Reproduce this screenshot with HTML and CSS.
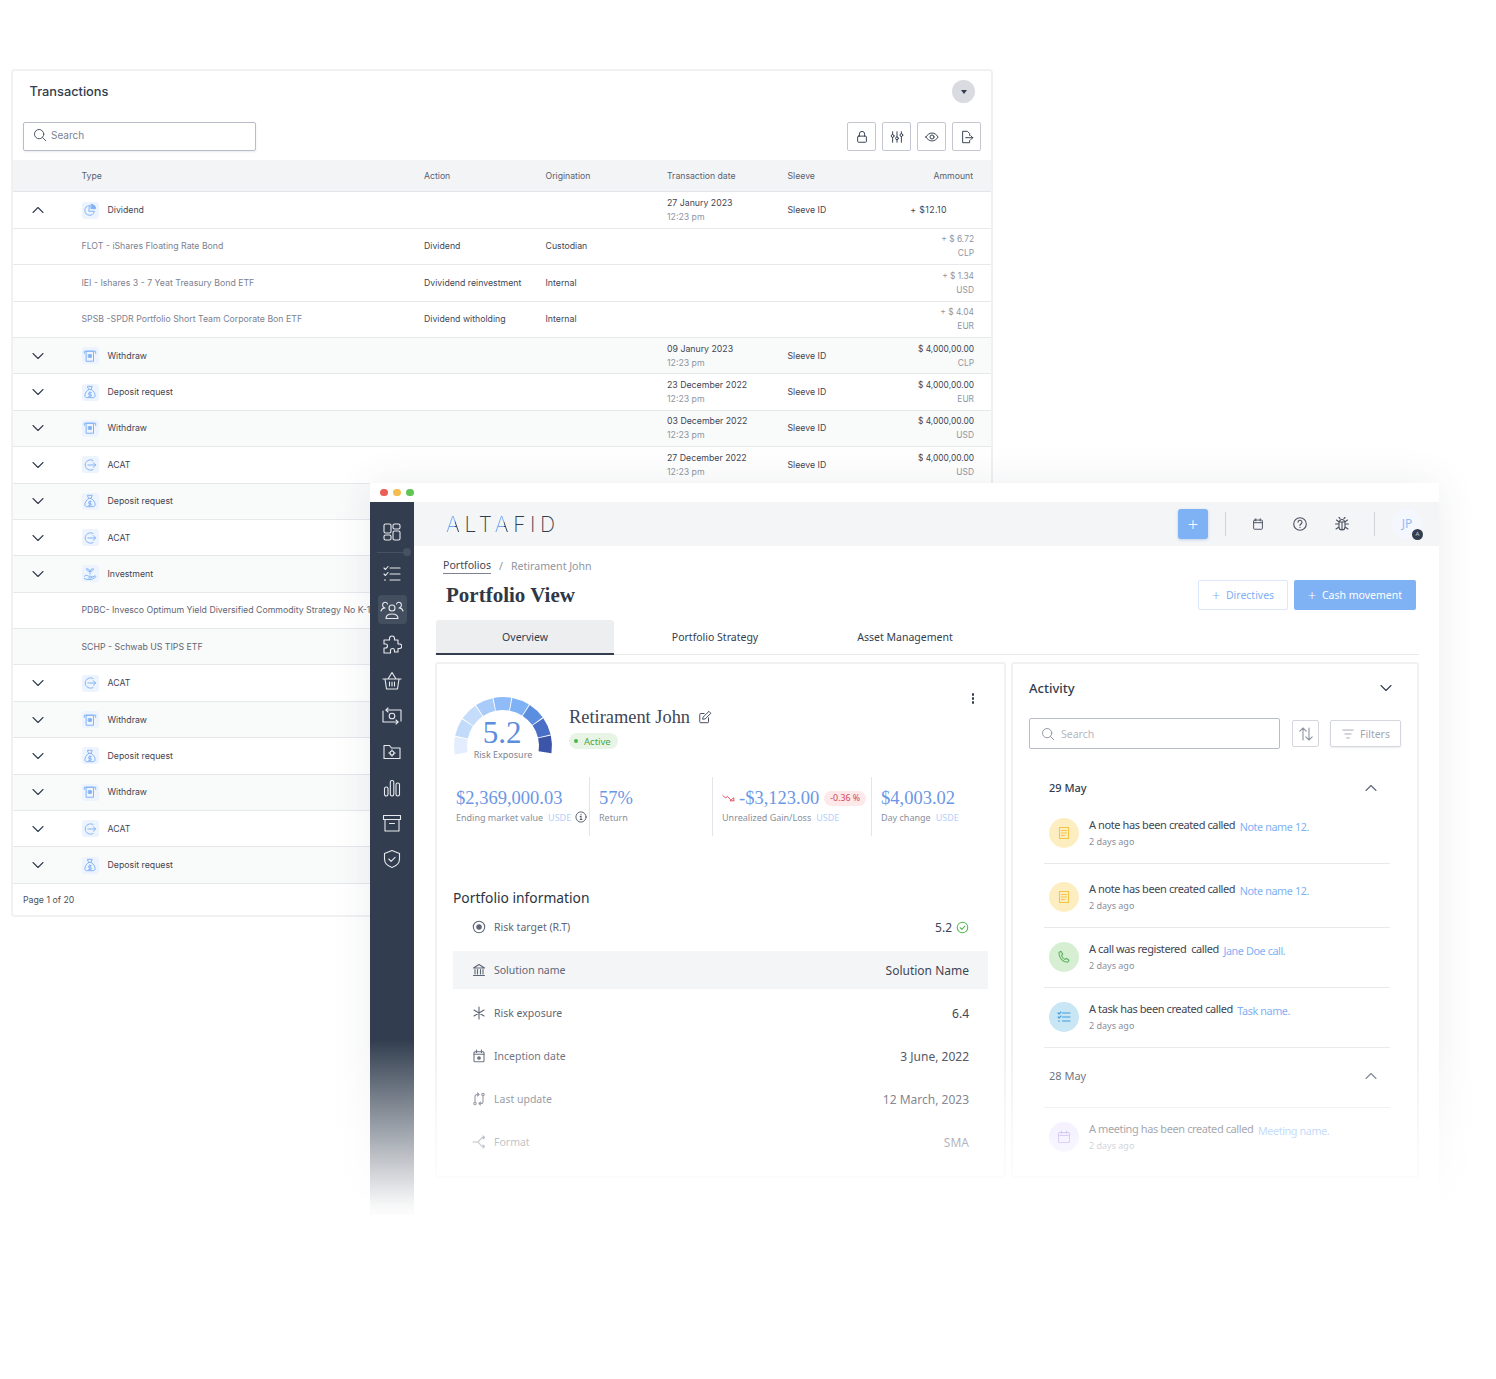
FILE: index.html
```html
<!DOCTYPE html>
<html lang="en">

<head>
    <meta charset="UTF-8">
    <meta name="viewport" content="width=device-width, initial-scale=1.0">
    <title>Portfolio View</title>
    <link rel="stylesheet" href="styles.css">
</head>

<body>
    <!-- icons -->
    <svg class="sprite" xmlns="http://www.w3.org/2000/svg">
        <symbol id="i-down" viewBox="0 0 14 14"><path d="M2 4.500l5 5 5-5"/></symbol>
        <symbol id="i-up" viewBox="0 0 14 14"><path d="M2 9.500l5-5 5 5"/></symbol>
        <symbol id="i-search" viewBox="0 0 16 16"><circle cx="7" cy="7" r="5.300"/><path d="M11 11l3.600 3.600"/></symbol>
        <symbol id="i-lock" viewBox="0 0 16 16"><rect x="3" y="7" width="10" height="7" rx="1"/><path d="M5 7V4.600a3 3 0 0 1 6 0V7"/></symbol>
        <symbol id="i-sliders" viewBox="0 0 16 16"><path d="M3 2v3M3 8.500v5.500M8 2v6M8 11v3M13 2v2M13 7.500v6.500"/><circle cx="3" cy="6.800" r="1.600"/><circle cx="8" cy="9.500" r="1.600"/><circle cx="13" cy="5.800" r="1.600"/></symbol>
        <symbol id="i-eye" viewBox="0 0 16 16"><path d="M1 8c2-3 4.300-4.500 7-4.500S13 5 15 8c-2 3-4.300 4.500-7 4.500S3 11 1 8z"/><circle cx="8" cy="8" r="2.300"/></symbol>
        <symbol id="i-export" viewBox="0 0 16 16"><path d="M11 6V4L8.500 1.500H3v13h8V12M6.500 8.800h8M12.300 6.500l2.300 2.300-2.300 2.300"/></symbol>
        <symbol id="i-pie" viewBox="0 0 16 16"><path d="M7 3a5.500 5.500 0 1 0 6 6.500H7z"/><path d="M9.500 1.500a5 5 0 0 1 5 5h-5z" fill="currentColor"/></symbol>
        <symbol id="i-atm" viewBox="0 0 16 16"><path d="M1.500 5V2.500h13V5"/><rect x="4" y="2.500" width="8" height="11.500"/><rect x="6.500" y="6.500" width="3" height="3" fill="currentColor"/></symbol>
        <symbol id="i-bag" viewBox="0 0 16 16"><path d="M5.500 1.500h5L9.300 5H6.700zM6.700 5C3.500 7 2 10 2.200 12.500c.2 1.300 1 2 2.300 2h7c1.300 0 2.100-.7 2.300-2C14 10 12.500 7 9.300 5M8 7.800v4.600M9.500 8.800H7.300a1 1 0 0 0 0 2.200h1.400a1 1 0 0 1 0 2H6.500"/></symbol>
        <symbol id="i-acat" viewBox="0 0 16 16"><path d="M11.500 2.800A6 6 0 1 0 11.500 13.200M5.500 8h9M11.800 5.300L14.500 8l-2.700 2.700"/></symbol>
        <symbol id="i-plant" viewBox="0 0 16 16"><path d="M8 8V5M8 5C8 3 6 2 4 2c0 2 2 3 4 3zM8 5c0-2 2-3 4-3 0 2-2 3-4 3zM1.500 10.500c2-1.500 3.500-1 5 0h2.500a1 1 0 0 1 0 2H6.500M9.500 12l4-1.800c1-.4 1.600.9.700 1.500L10 14.200H4.500l-3-1"/></symbol>
        <symbol id="s-grid" viewBox="0 0 20 20"><rect x="2" y="2" width="7" height="9" rx="1.500"/><rect x="11" y="2" width="7" height="5" rx="1.500"/><rect x="2" y="13" width="7" height="5" rx="1.500"/><rect x="11" y="9" width="7" height="9" rx="1.500"/></symbol>
        <symbol id="s-list" viewBox="0 0 20 20"><path d="M8 4h10M8 10h10M8 16h10M2 4l1.500 1.500L6 2.500M2 10l1.500 1.500L6 8.500M2.500 16h1"/></symbol>
        <symbol id="s-users" viewBox="0 0 24 20"><circle cx="12" cy="8" r="3"/><path d="M6 18.500c0-3 2.500-4.500 6-4.500s6 1.500 6 4.500zM1 11c.5-2 2-3 4-3a3 3 0 0 1-1-5.500c1.500-.5 3 .3 3.500 1.500M23 11c-.5-2-2-3-4-3a3 3 0 0 0 1-5.500c-1.500-.5-3 .3-3.500 1.500"/></symbol>
        <symbol id="s-puzzle" viewBox="0 0 20 20"><path d="M7.500 5V3.500a2.500 2.500 0 0 1 5 0V5H16v4h1.500a2 2 0 0 1 0 4.500H16V17h-3.500v-1.500a2 2 0 0 0-4 0V18H2v-5h1.500a2 2 0 0 0 0-4H2V5z"/></symbol>
        <symbol id="s-basket" viewBox="0 0 20 20"><path d="M1 8h18M3 8l1.500 10h11L17 8M6 8l4-6.500L14 8M7.500 11v4M10 11v4M12.500 11v4"/></symbol>
        <symbol id="s-money" viewBox="0 0 22 20"><path d="M5 4h15v11M17 16H2V5"/><circle cx="11" cy="10" r="2.800"/><path d="M7 2L5 4l2 2M15 14l2 2-2 2"/></symbol>
        <symbol id="s-folder" viewBox="0 0 20 20"><path d="M2 3.500h5.500l2 2.500H18v10.500H2z"/><circle cx="10" cy="11" r="2"/><path d="M10 7.800v1.200M10 13v1.200M6.800 11H8M12 11h1.200"/></symbol>
        <symbol id="s-bars" viewBox="0 0 20 20"><rect x="2.500" y="9" width="3.500" height="9" rx="1.700"/><rect x="8.300" y="2.500" width="3.500" height="15.500" rx="1.700"/><rect x="14" y="5" width="3.500" height="13" rx="1.700"/></symbol>
        <symbol id="s-archive" viewBox="0 0 20 20"><rect x="1.500" y="2.500" width="17" height="4"/><path d="M3 6.500V18h14V6.500M7.500 10.500h5"/></symbol>
        <symbol id="s-shield" viewBox="0 0 20 20"><path d="M10 1.500l7.500 3V10c0 4-3 7-7.500 8.500C5.500 17 2.500 14 2.500 10V4.500z"/><path d="M6.800 10l2.300 2.300 4-4"/></symbol>
        <symbol id="h-cal" viewBox="0 0 16 16"><rect x="3" y="3.500" width="10" height="10.500" rx="1"/><path d="M3 6.500h10M5.500 2v2.500M10.500 2v2.500"/></symbol>
        <symbol id="h-help" viewBox="0 0 16 16"><circle cx="8" cy="8" r="6.300"/><path d="M6 6.300a2 2 0 1 1 3 1.700c-.7.400-1 .8-1 1.500M8 11.300v.2"/></symbol>
        <symbol id="h-bug" viewBox="0 0 16 16"><path d="M5 6h6v5a3 3 0 0 1-6 0zM5.500 6a2.500 2.500 0 0 1 5 0M8 6v8M5 8H1.500M11 8h3.500M5 11l-3 2M11 11l3 2M5.300 6L2.500 4M10.700 6l2.800-2M6 2.500L5 1.500M10 2.500l1-1"/></symbol>
        <symbol id="i-edit" viewBox="0 0 16 16"><path d="M12 9v4.500a1 1 0 0 1-1 1H3a1 1 0 0 1-1-1V5a1 1 0 0 1 1-1h4"/><path d="M6 8L12.500 1.500l2.200 2.200L8.200 10.200 5.700 10.500z"/></symbol>
        <symbol id="i-info" viewBox="0 0 16 16"><circle cx="8" cy="8" r="6.800"/><path d="M8 7.300v4M8 4.500v.8M6.800 7.300H8M6.800 11.300h2.400"/></symbol>
        <symbol id="i-loss" viewBox="0 0 16 10"><path d="M1 2l3.500 3 2-2 4 4M14.500 8.500h-4.500l4-3.500z"/></symbol>
        <symbol id="p-target" viewBox="0 0 14 14"><circle cx="7" cy="7" r="5.700"/><circle cx="7" cy="7" r="2.200" fill="currentColor"/></symbol>
        <symbol id="p-bank" viewBox="0 0 14 14"><path d="M1.500 5L7 1.500 12.500 5zM3 6.500v4.500M5.500 6.500v4.500M8.500 6.500v4.500M11 6.500v4.500M1.500 12.500h11"/></symbol>
        <symbol id="p-star" viewBox="0 0 14 14"><path d="M7 1v12M2 4l10 6M12 4L2 10"/></symbol>
        <symbol id="p-date" viewBox="0 0 14 14"><rect x="2" y="2.800" width="10" height="10" rx="1"/><path d="M2 5.300h10M4.500 1v2.500M9.500 1v2.500"/><circle cx="7" cy="9" r="1.300" fill="currentColor"/></symbol>
        <symbol id="p-update" viewBox="0 0 14 14"><path d="M3 10V4.500A2 2 0 0 1 5 2.500h2M5.500 1L7 2.500 5.500 4M11 4v5.500a2 2 0 0 1-2 2H7M8.500 13L7 11.500 8.500 10"/><circle cx="3" cy="11.500" r="1.200"/><circle cx="11" cy="2.500" r="1.200"/></symbol>
        <symbol id="p-format" viewBox="0 0 14 14"><path d="M1 7h5l4-4.500h2M6 7l4 4.500h2M11 1l1.500 1.500L11 4M11 10l1.500 1.500L11 13"/></symbol>
        <symbol id="i-check" viewBox="0 0 14 14"><circle cx="7" cy="7" r="5.700"/><path d="M4.500 7.200L6.300 9l3.300-3.500"/></symbol>
        <symbol id="i-sort" viewBox="0 0 16 16"><path d="M5 14V2M1.800 5.200L5 2l3.200 3.200M11 2v12M7.800 10.800L11 14l3.200-3.200"/></symbol>
        <symbol id="i-filter" viewBox="0 0 16 16"><path d="M2 3.500h12M4.500 8h7M6.500 12.500h3"/></symbol>
        <symbol id="a-note" viewBox="0 0 14 14"><rect x="2.500" y="1.500" width="9" height="11"/><path d="M4.500 4.500h5M4.500 7h5M4.500 9.500h3"/></symbol>
        <symbol id="a-call" viewBox="0 0 14 14"><path d="M2 2.500L4 1.300l1.800 3L4.500 5.300c.5 1.800 2 3.400 3.700 4.200l1.100-1.200 2.700 2-1.300 2C6 12.500 1.500 7.500 2 2.500z"/></symbol>
        <symbol id="a-task" viewBox="0 0 14 14"><path d="M5.500 3h7.500M5.500 7h7.500M5.500 11h7.500M1 3l1 1 2-2M1 7l1 1 2-2M1.500 11h1"/></symbol>
        <symbol id="a-meet" viewBox="0 0 14 14"><rect x="1.500" y="2.500" width="11" height="10" rx="1"/><path d="M1.500 5.500h11M4.500 1v2.500M9.500 1v2.500"/></symbol>
    </svg>

    <!-- Transactions window -->
    <section class="tx-win">
        <div class="tx-top">
            <h2 class="tx-title">Transactions</h2>
            <button class="round-btn"><span class="caret"></span></button>
        </div>
        <div class="tx-tools">
            <div class="tx-search"><svg class="ic ic-14"><use href="#i-search"/></svg><span>Search</span></div>
            <div class="tool-group">
                <button class="tool-btn"><svg class="ic ic-14"><use href="#i-lock"/></svg></button>
                <button class="tool-btn"><svg class="ic ic-14"><use href="#i-sliders"/></svg></button>
                <button class="tool-btn"><svg class="ic ic-14"><use href="#i-eye"/></svg></button>
                <button class="tool-btn"><svg class="ic ic-14"><use href="#i-export"/></svg></button>
            </div>
        </div>

        <div class="tx-head">
            <span></span><span>Type</span><span>Action</span><span>Origination</span><span>Transaction date</span><span>Sleeve</span><span class="right">Ammount</span>
        </div>

        <div class="tx-row">
            <svg class="ic chev"><use href="#i-up"/></svg>
            <div class="type"><span class="tile"><svg class="ic"><use href="#i-pie"/></svg></span>Dividend</div>
            <span></span><span></span>
            <div class="two"><span>27 Janury 2023</span><span class="mute">12:23 pm</span></div>
            <span>Sleeve ID</span>
            <span class="right pad-amt">+ $12.10</span>
        </div>
        <div class="tx-row">
            <span></span><span class="mute-name">FLOT - iShares Floating Rate Bond</span><span>Dividend</span><span>Custodian</span><span></span><span></span>
            <div class="two right amt"><span class="mute">+ $ 6.72</span><span class="mute">CLP</span></div>
        </div>
        <div class="tx-row">
            <span></span><span class="mute-name">IEI - Ishares 3 - 7 Yeat Treasury Bond ETF</span><span>Dvividend reinvestment</span><span>Internal</span><span></span><span></span>
            <div class="two right amt"><span class="mute">+ $ 1.34</span><span class="mute">USD</span></div>
        </div>
        <div class="tx-row">
            <span></span><span class="mute-name">SPSB -SPDR Portfolio Short Team Corporate Bon ETF</span><span>Dividend witholding</span><span>Internal</span><span></span><span></span>
            <div class="two right amt"><span class="mute">+ $ 4.04</span><span class="mute">EUR</span></div>
        </div>
        <div class="tx-row alt">
            <svg class="ic chev"><use href="#i-down"/></svg>
            <div class="type"><span class="tile"><svg class="ic"><use href="#i-atm"/></svg></span>Withdraw</div>
            <span></span><span></span>
            <div class="two"><span>09 Janury 2023</span><span class="mute">12:23 pm</span></div>
            <span>Sleeve ID</span>
            <div class="two right amt"><span>$ 4,000,00.00</span><span class="mute">CLP</span></div>
        </div>
        <div class="tx-row">
            <svg class="ic chev"><use href="#i-down"/></svg>
            <div class="type"><span class="tile"><svg class="ic"><use href="#i-bag"/></svg></span>Deposit request</div>
            <span></span><span></span>
            <div class="two"><span>23 December 2022</span><span class="mute">12:23 pm</span></div>
            <span>Sleeve ID</span>
            <div class="two right amt"><span>$ 4,000,00.00</span><span class="mute">EUR</span></div>
        </div>
        <div class="tx-row alt">
            <svg class="ic chev"><use href="#i-down"/></svg>
            <div class="type"><span class="tile"><svg class="ic"><use href="#i-atm"/></svg></span>Withdraw</div>
            <span></span><span></span>
            <div class="two"><span>03 December 2022</span><span class="mute">12:23 pm</span></div>
            <span>Sleeve ID</span>
            <div class="two right amt"><span>$ 4,000,00.00</span><span class="mute">USD</span></div>
        </div>
        <div class="tx-row">
            <svg class="ic chev"><use href="#i-down"/></svg>
            <div class="type"><span class="tile"><svg class="ic"><use href="#i-acat"/></svg></span>ACAT</div>
            <span></span><span></span>
            <div class="two"><span>27 December 2022</span><span class="mute">12:23 pm</span></div>
            <span>Sleeve ID</span>
            <div class="two right amt"><span>$ 4,000,00.00</span><span class="mute">USD</span></div>
        </div>
        <div class="tx-row alt">
            <svg class="ic chev"><use href="#i-down"/></svg>
            <div class="type"><span class="tile"><svg class="ic"><use href="#i-bag"/></svg></span>Deposit request</div>
        </div>
        <div class="tx-row">
            <svg class="ic chev"><use href="#i-down"/></svg>
            <div class="type"><span class="tile"><svg class="ic"><use href="#i-acat"/></svg></span>ACAT</div>
        </div>
        <div class="tx-row alt">
            <svg class="ic chev"><use href="#i-down"/></svg>
            <div class="type"><span class="tile"><svg class="ic"><use href="#i-plant"/></svg></span>Investment</div>
        </div>
        <div class="tx-row">
            <span></span><span class="sub-name">PDBC- Invesco Optimum Yield Diversified Commodity Strategy No K-1</span>
        </div>
        <div class="tx-row alt">
            <span></span><span class="sub-name">SCHP - Schwab US TIPS ETF</span>
        </div>
        <div class="tx-row">
            <svg class="ic chev"><use href="#i-down"/></svg>
            <div class="type"><span class="tile"><svg class="ic"><use href="#i-acat"/></svg></span>ACAT</div>
        </div>
        <div class="tx-row alt">
            <svg class="ic chev"><use href="#i-down"/></svg>
            <div class="type"><span class="tile"><svg class="ic"><use href="#i-atm"/></svg></span>Withdraw</div>
        </div>
        <div class="tx-row">
            <svg class="ic chev"><use href="#i-down"/></svg>
            <div class="type"><span class="tile"><svg class="ic"><use href="#i-bag"/></svg></span>Deposit request</div>
        </div>
        <div class="tx-row alt">
            <svg class="ic chev"><use href="#i-down"/></svg>
            <div class="type"><span class="tile"><svg class="ic"><use href="#i-atm"/></svg></span>Withdraw</div>
        </div>
        <div class="tx-row">
            <svg class="ic chev"><use href="#i-down"/></svg>
            <div class="type"><span class="tile"><svg class="ic"><use href="#i-acat"/></svg></span>ACAT</div>
        </div>
        <div class="tx-row alt">
            <svg class="ic chev"><use href="#i-down"/></svg>
            <div class="type"><span class="tile"><svg class="ic"><use href="#i-bag"/></svg></span>Deposit request</div>
        </div>
        <div class="tx-foot">Page 1 of 20</div>
    </section>

    <!-- App window -->
    <section class="app-win">
        <div class="titlebar">
            <span class="dot red"></span><span class="dot yellow"></span><span class="dot green"></span>
        </div>
        <div class="app-body">
            <nav class="sidebar">
                <a class="side-item side-first"><svg class="ic"><use href="#s-grid"/></svg></a>
                <span class="side-line"></span>
                <span class="side-toggle"></span>
                <a class="side-item"><svg class="ic"><use href="#s-list"/></svg></a>
                <a class="side-item active"><svg class="ic ic-wide"><use href="#s-users"/></svg></a>
                <a class="side-item"><svg class="ic"><use href="#s-puzzle"/></svg></a>
                <a class="side-item"><svg class="ic"><use href="#s-basket"/></svg></a>
                <a class="side-item"><svg class="ic ic-wide"><use href="#s-money"/></svg></a>
                <a class="side-item"><svg class="ic"><use href="#s-folder"/></svg></a>
                <a class="side-item"><svg class="ic"><use href="#s-bars"/></svg></a>
                <a class="side-item"><svg class="ic"><use href="#s-archive"/></svg></a>
                <a class="side-item"><svg class="ic"><use href="#s-shield"/></svg></a>
            </nav>

            <div class="main">
                <header class="topbar">
                    <div class="logo"><span class="logo-a">A</span>LT<span class="logo-a">A</span>FID</div>
                    <button class="plus-btn">+</button>
                    <span class="top-line"></span>
                    <span class="top-icon"><svg class="ic ic-14"><use href="#h-cal"/></svg></span>
                    <span class="top-icon"><svg class="ic ic-16"><use href="#h-help"/></svg></span>
                    <span class="top-icon"><svg class="ic ic-16"><use href="#h-bug"/></svg></span>
                    <span class="top-line"></span>
                    <div class="avatar">JP<span class="avatar-badge">A</span></div>
                </header>

                <div class="content">
                    <div class="page-head">
                        <div>
                            <div class="crumbs"><a>Portfolios</a><i>/</i><span>Retirament John</span></div>
                            <h1 class="page-title">Portfolio View</h1>
                        </div>
                        <div class="page-actions">
                            <button class="btn btn-ghost"><b>+</b>Directives</button>
                            <button class="btn btn-blue"><b>+</b>Cash movement</button>
                        </div>
                    </div>

                    <div class="tabs">
                        <a class="tab current">Overview</a>
                        <a class="tab">Portfolio Strategy</a>
                        <a class="tab">Asset Management</a>
                    </div>

                    <div class="cards">
                        <div class="card card-left">
                            <span class="more"><i></i><i></i><i></i></span>
                            <div class="summary">
                                <div class="gauge">
                                    <svg width="100" height="62" viewBox="0 0 100 62">
                                        <g fill="none" stroke-width="13">
                                            <circle cx="50" cy="49" r="42.5" pathLength="360" stroke="#e3edfd" stroke-dasharray="21 339" transform="rotate(170 50 49)"/>
                                            <circle cx="50" cy="49" r="42.5" pathLength="360" stroke="#c3dbfb" stroke-dasharray="21 339" transform="rotate(192.200 50 49)"/>
                                            <circle cx="50" cy="49" r="42.5" pathLength="360" stroke="#c5dcfb" stroke-dasharray="21 339" transform="rotate(214.400 50 49)"/>
                                            <circle cx="50" cy="49" r="42.5" pathLength="360" stroke="#a8cbf9" stroke-dasharray="21 339" transform="rotate(236.600 50 49)"/>
                                            <circle cx="50" cy="49" r="42.5" pathLength="360" stroke="#8fbcf8" stroke-dasharray="21 339" transform="rotate(258.800 50 49)"/>
                                            <circle cx="50" cy="49" r="42.5" pathLength="360" stroke="#7fb1f5" stroke-dasharray="21 339" transform="rotate(281 50 49)"/>
                                            <circle cx="50" cy="49" r="42.5" pathLength="360" stroke="#5b8ede" stroke-dasharray="21 339" transform="rotate(303.200 50 49)"/>
                                            <circle cx="50" cy="49" r="42.5" pathLength="360" stroke="#4a6fc7" stroke-dasharray="21 339" transform="rotate(325.400 50 49)"/>
                                            <circle cx="50" cy="49" r="42.5" pathLength="360" stroke="#3c55a8" stroke-dasharray="21 339" transform="rotate(347.600 50 49)"/>
                                        </g>
                                    </svg>
                                    <div class="gauge-num">5.2</div>
                                    <div class="gauge-label">Risk Exposure</div>
                                </div>
                                <div class="holder">
                                    <div class="holder-name">Retirament John <svg class="ic ic-14"><use href="#i-edit"/></svg></div>
                                    <span class="status"><i></i>Active</span>
                                </div>
                            </div>

                            <div class="metrics">
                                <div class="metric m1">
                                    <div class="m-val">$2,369,000.03</div>
                                    <div class="m-label">Ending market value <em>USDE</em><svg class="ic ic-info"><use href="#i-info"/></svg></div>
                                </div>
                                <div class="metric m2">
                                    <div class="m-val">57%</div>
                                    <div class="m-label">Return</div>
                                </div>
                                <div class="metric m3">
                                    <div class="m-val"><svg class="ic ic-loss"><use href="#i-loss"/></svg>-$3,123.00<span class="loss-pill">-0.36 %</span></div>
                                    <div class="m-label">Unrealized Gain/Loss <em>USDE</em></div>
                                </div>
                                <div class="metric m4">
                                    <div class="m-val">$4,003.02</div>
                                    <div class="m-label">Day change <em>USDE</em></div>
                                </div>
                            </div>

                            <h3 class="info-title">Portfolio information</h3>
                            <div class="info-row"><svg class="ic ic-14"><use href="#p-target"/></svg><span class="info-key">Risk target (R.T)</span><span class="info-val">5.2<svg class="ic ic-check"><use href="#i-check"/></svg></span></div>
                            <div class="info-row shaded"><svg class="ic ic-14"><use href="#p-bank"/></svg><span class="info-key">Solution name</span><span class="info-val">Solution Name</span></div>
                            <div class="info-row"><svg class="ic ic-14"><use href="#p-star"/></svg><span class="info-key">Risk exposure</span><span class="info-val">6.4</span></div>
                            <div class="info-row"><svg class="ic ic-14"><use href="#p-date"/></svg><span class="info-key">Inception date</span><span class="info-val">3 June, 2022</span></div>
                            <div class="info-row"><svg class="ic ic-14"><use href="#p-update"/></svg><span class="info-key">Last update</span><span class="info-val">12 March, 2023</span></div>
                            <div class="info-row"><svg class="ic ic-14"><use href="#p-format"/></svg><span class="info-key">Format</span><span class="info-val">SMA</span></div>
                        </div>

                        <div class="card card-right">
                            <div class="act-head">Activity<svg class="ic ic-14"><use href="#i-down"/></svg></div>
                            <div class="act-tools">
                                <div class="act-search"><svg class="ic ic-14"><use href="#i-search"/></svg>Search</div>
                                <button class="sort-btn"><svg class="ic ic-16"><use href="#i-sort"/></svg></button>
                                <button class="filter-btn"><svg class="ic ic-14"><use href="#i-filter"/></svg>Filters</button>
                            </div>

                            <div class="act-list">
                                <div class="day-head">29 May<svg class="ic ic-14"><use href="#i-up"/></svg></div>
                                <div class="act-item tall">
                                    <span class="bubble yellow"><svg class="ic ic-14"><use href="#a-note"/></svg></span>
                                    <div><p>A note has been created called <a>Note name 12.</a></p><small>2 days ago</small></div>
                                </div>
                                <div class="act-item tall">
                                    <span class="bubble yellow"><svg class="ic ic-14"><use href="#a-note"/></svg></span>
                                    <div><p>A note has been created called <a>Note name 12.</a></p><small>2 days ago</small></div>
                                </div>
                                <div class="act-item">
                                    <span class="bubble lime"><svg class="ic ic-14"><use href="#a-call"/></svg></span>
                                    <div><p>A call was registered&nbsp; called <a>Jane Doe call.</a></p><small>2 days ago</small></div>
                                </div>
                                <div class="act-item">
                                    <span class="bubble sky"><svg class="ic ic-14"><use href="#a-task"/></svg></span>
                                    <div><p>A task has been created called <a>Task name.</a></p><small>2 days ago</small></div>
                                </div>
                                <div class="day-head day-two">28 May<svg class="ic ic-14"><use href="#i-up"/></svg></div>
                                <div class="act-item last">
                                    <span class="bubble violet"><svg class="ic ic-14"><use href="#a-meet"/></svg></span>
                                    <div><p>A meeting has been created called <a>Meeting name.</a></p><small>2 days ago</small></div>
                                </div>
                            </div>
                        </div>
                    </div>
                </div>
            </div>
        </div>
        <div class="app-fade"></div>
    </section>
</body>

</html>
```

FILE: styles.css
```css
* {
    margin: 0;
    padding: 0;
    box-sizing: border-box;
}

body {
    position: relative;
    width: 1496px;
    height: 1379px;
    overflow: hidden;
    background-color: #fff;
    font-family: "Inter", "Liberation Sans", sans-serif;
    color: #3f4654;
}

button {
    font-family: inherit;
    background: none;
    border: 0;
}

.sprite {
    display: none;
}

.ic {
    display: block;
    width: 14px;
    height: 14px;
    flex: none;
    fill: none;
    stroke: currentColor;
    stroke-width: 1.1;
    stroke-linecap: round;
    stroke-linejoin: round;
}

.ic-14 {
    width: 14px;
    height: 14px;
}

.ic-16 {
    width: 16px;
    height: 16px;
}

/* ---------- transactions ---------- */
.tx-win {
    position: absolute;
    left: 11px;
    top: 69px;
    width: 982px;
    height: 848px;
    border: 2px solid #f0f1f3;
    border-radius: 4px;
    background-color: #fff;
    font-size: 8.750px;
}

.tx-top {
    display: flex;
    align-items: center;
    justify-content: space-between;
    height: 51px;
    padding: 0 16px 10px 16.500px;
}

.tx-title {
    font-size: 12.800px;
    font-weight: 500;
    color: #323e4f;
}

.round-btn {
    display: flex;
    align-items: center;
    justify-content: center;
    width: 23px;
    height: 23px;
    border-radius: 50%;
    background-color: #d9dbe0;
}

.caret {
    border-top: 4px solid #323e4f;
    border-left: 3.500px solid transparent;
    border-right: 3.500px solid transparent;
}

.tx-tools {
    display: flex;
    justify-content: space-between;
    height: 29px;
    margin-bottom: 9px;
    padding: 0 10px;
}

.tx-search {
    display: flex;
    align-items: center;
    gap: 4px;
    width: 233px;
    padding: 0 9px 3px;
    border: 1px solid #b9bcc9;
    border-radius: 2px;
    box-shadow: 0 1px 2px rgba(50, 62, 79, .1);
    font-size: 10px;
    color: #7c8290;
}

.tx-search .ic {
    color: #4a5160;
}

.tool-group {
    display: flex;
    gap: 6px;
}

.tool-btn {
    display: flex;
    align-items: center;
    justify-content: center;
    width: 29px;
    height: 29px;
    border: 1px solid #c4c7d1;
    border-radius: 2px;
    color: #323e4f;
}

.tx-head,
.tx-row {
    display: grid;
    grid-template-columns: 68.500px 342.500px 121.500px 121.500px 120.500px 1fr 60px;
    align-items: center;
    padding-right: 17px;
    white-space: nowrap;
}

.tx-head {
    height: 32.400px;
    border-bottom: 1px solid #e3e5ea;
    background-color: #f3f4f6;
    color: #5a6170;
    font-size: 8.700px;
}

.tx-head .right {
    padding-right: 1px;
}

.tx-row {
    height: 36.400px;
    border-bottom: 1.400px solid #e6e8ec;
    color: #3f4654;
}

.tx-row.alt {
    background-color: #f9fafa;
}

.chev {
    margin-left: 18px;
    color: #323e4f;
}

.type {
    display: flex;
    align-items: center;
    gap: 9px;
}

.tile {
    display: flex;
    align-items: center;
    justify-content: center;
    width: 17px;
    height: 17px;
    border-radius: 3px;
    background-color: #eef4fe;
    color: #7fb1f5;
}

.tile .ic {
    width: 14px;
    height: 14px;
}

.mute-name {
    color: #7c8290;
}

.sub-name {
    color: #5f6675;
}

.two {
    display: flex;
    flex-direction: column;
    gap: 4px;
    line-height: 10px;
}

.mute {
    color: #8f95a1;
}

.right {
    justify-self: end;
    text-align: right;
}

.amt {
    font-size: 8.400px;
}

.pad-amt {
    padding-right: 27px;
    letter-spacing: .4px;
}

.tx-foot {
    padding: 11px 10px;
    font-size: 8.750px;
    color: #4a5160;
}

/* ---------- app window ---------- */
.app-win {
    position: absolute;
    left: 370px;
    top: 483px;
    width: 1069px;
    height: 732px;
    background-color: #fff;
    box-shadow: 0 0 38px rgba(50, 62, 90, .09);
    font-family: "Noto Sans", "Liberation Sans", sans-serif;
}

.titlebar {
    display: flex;
    align-items: center;
    gap: 5.500px;
    height: 19px;
    padding-left: 10px;
}

.dot {
    width: 7.500px;
    height: 7.500px;
    border-radius: 50%;
}

.dot.red {
    background-color: #ec5f56;
}

.dot.yellow {
    background-color: #f5bd4f;
}

.dot.green {
    background-color: #61c454;
}

.app-body {
    display: flex;
    height: 713px;
}

.sidebar {
    position: relative;
    flex: none;
    width: 44px;
    padding-top: 12px;
    background-color: #323e4f;
    color: #e8eaee;
}

.side-item {
    display: flex;
    align-items: center;
    justify-content: center;
    width: 29px;
    height: 29px;
    margin: 6.600px 0 0 7.500px;
    border-radius: 4px;
}

.side-first {
    margin-top: 3px;
}

.side-item .ic {
    width: 20px;
    height: 20px;
}

.side-item .ic-wide {
    width: 24px;
    height: 20px;
}

.side-item.active {
    background-color: #434e5f;
}

.side-line {
    display: block;
    height: 1px;
    margin: 6px 7px 0;
    background-color: #465162;
}

.side-toggle {
    position: absolute;
    left: 33px;
    top: 46px;
    width: 8px;
    height: 8px;
    border-radius: 50%;
    background-color: #465162;
}

.main {
    flex: 1;
    min-width: 0;
}

.topbar {
    display: flex;
    align-items: center;
    height: 44px;
    padding: 0 17px 0 32px;
    background-color: #f4f5f7;
}

.logo {
    flex: 1;
    font-family: "Inter", sans-serif;
    font-size: 21px;
    font-weight: 200;
    letter-spacing: 4.600px;
    color: #323e4f;
}

.logo-a {
    background: linear-gradient(90deg, #6ea6f2 50%, #323e4f 50%);
    -webkit-background-clip: text;
    background-clip: text;
    color: transparent;
}

.plus-btn {
    width: 30px;
    height: 30px;
    border-radius: 3px;
    background-color: #7fb1f5;
    box-shadow: 0 1px 3px rgba(70, 120, 200, .3);
    color: #fff;
    font-family: "Noto Sans", sans-serif;
    font-size: 18px;
    font-weight: 300;
}

.top-line {
    width: 1px;
    height: 24px;
    margin: 0 11px 0 17px;
    background-color: #d0d3d8;
}

.top-icon + .top-line {
    margin: 0 17px 0 11px;
}

.top-icon {
    display: flex;
    align-items: center;
    justify-content: center;
    width: 42px;
    color: #4a5160;
}

.avatar {
    position: relative;
    width: 30px;
    height: 30px;
    border-radius: 50%;
    background-color: #f4f7fd;
    color: #8fbcf8;
    font-size: 12px;
    line-height: 30px;
    text-align: center;
}

.avatar-badge {
    position: absolute;
    right: -1px;
    bottom: -1px;
    width: 11px;
    height: 11px;
    border-radius: 50%;
    background-color: #323e4f;
    color: #cfd5de;
    font-size: 6px;
    line-height: 11px;
}

.content {
    padding: 0 20px 0 21px;
}

.page-head {
    display: flex;
    justify-content: space-between;
    height: 74px;
}

.crumbs {
    display: flex;
    gap: 8px;
    padding: 13px 0 0 8px;
    font-size: 10.600px;
    line-height: 15px;
    color: #8f95a1;
}

.crumbs a {
    color: #3f4654;
    border-bottom: 1px solid #7c8290;
    line-height: 13px;
}

.crumbs i {
    font-style: normal;
}

.page-title {
    margin: 7px 0 0 11px;
    font-family: "Liberation Serif", serif;
    font-size: 21px;
    font-weight: 700;
    line-height: 28px;
    color: #2f3847;
}

.page-actions {
    display: flex;
    gap: 6px;
    padding: 34px 3px 0 0;
}

.btn {
    display: flex;
    align-items: center;
    justify-content: center;
    gap: 6px;
    height: 30px;
    border-radius: 2px;
    font-family: "Noto Sans", sans-serif;
    font-size: 10.500px;
}

.btn b {
    font-size: 14px;
    font-weight: 300;
}

.btn-ghost {
    width: 90px;
    border: 1px solid #dce8fc;
    color: #7fb1f5;
}

.btn-blue {
    width: 122px;
    background-color: #7fb1f5;
    color: #fff;
}

.tabs {
    display: flex;
    height: 35px;
    border-bottom: 1px solid #e8e9ec;
}

.tab {
    width: 190px;
    font-size: 10.500px;
    line-height: 34px;
    text-align: center;
    color: #323e4f;
}

.tab.current {
    width: 178px;
    height: 35px;
    margin-left: 1px;
    border-bottom: 2px solid #323e4f;
    border-radius: 3px 3px 0 0;
    background-color: #eceef0;
}

.tab:nth-child(2) {
    margin-left: 6px;
}

.cards {
    display: flex;
    gap: 5px;
    margin-top: 7px;
}

.card {
    position: relative;
    height: 516px;
    border: 2px solid #f0f1f3;
    border-radius: 3px;
}

.card-left {
    width: 571px;
    padding: 33px 16px 0;
}

.card-right {
    width: 408px;
    padding: 16px 16px 0;
}

.more {
    position: absolute;
    right: 30px;
    top: 29px;
    display: flex;
    flex-direction: column;
    gap: 1.500px;
}

.more i {
    width: 2.500px;
    height: 2.500px;
    border-radius: 50%;
    background-color: #323e4f;
}

.summary {
    display: flex;
    height: 80px;
}

.gauge {
    position: relative;
    width: 100px;
    height: 62px;
}

.gauge-num {
    position: absolute;
    left: -2px;
    right: 0;
    top: 18px;
    font-family: "Liberation Serif", serif;
    font-size: 31px;
    line-height: 36px;
    text-align: center;
    color: #5b8ede;
}

.gauge-label {
    position: absolute;
    left: 0;
    right: 0;
    top: 52px;
    font-size: 9px;
    line-height: 12px;
    text-align: center;
    color: #7c8290;
}

.holder {
    margin-left: 16px;
    padding-top: 8px;
}

.holder-name {
    display: flex;
    align-items: center;
    gap: 8px;
    font-family: "Liberation Serif", serif;
    font-size: 18.400px;
    line-height: 24px;
    color: #3f4654;
}

.status {
    display: flex;
    align-items: center;
    gap: 6px;
    width: fit-content;
    height: 16px;
    margin-top: 4px;
    padding: 0 7px 0 5px;
    border-radius: 8px;
    background-color: #e8f5e6;
    color: #4aa647;
    font-size: 9.500px;
}

.status i {
    width: 4px;
    height: 4px;
    border-radius: 50%;
    background-color: #4fb64b;
}

.metrics {
    display: flex;
    height: 59px;
}

.metric {
    padding: 10px 0 0 9px;
    border-right: 1px solid #e3e5ea;
}

.m1 {
    width: 137px;
    padding-left: 3px;
}

.m2 {
    width: 123px;
}

.m3 {
    width: 159px;
}

.m4 {
    border-right: 0;
}

.m-val {
    display: flex;
    align-items: center;
    font-family: "Liberation Serif", serif;
    font-size: 18.500px;
    line-height: 22px;
    color: #6b97e6;
    white-space: nowrap;
}

.m-label {
    display: flex;
    align-items: center;
    gap: 5px;
    margin-top: 3px;
    font-size: 9px;
    line-height: 12px;
    color: #8a8f9c;
    white-space: nowrap;
}

.m-label em {
    font-style: normal;
    color: #b4d0fa;
}

.ic-info {
    width: 12px;
    height: 12px;
    margin: -3px 0 0 -1px;
    color: #3f4654;
}

.ic-loss {
    width: 13px;
    height: 8px;
    margin-right: 4px;
    color: #e23b4a;
}

.loss-pill {
    height: 15px;
    margin-left: 5px;
    padding: 0 6px;
    border-radius: 8px;
    background-color: #fde9e9;
    color: #d2475a;
    font-family: "Noto Sans", sans-serif;
    font-size: 8.800px;
    line-height: 15px;
}

.info-title {
    margin-top: 54px;
    margin-bottom: 2px;
    font-size: 13.800px;
    font-weight: 400;
    line-height: 16px;
    color: #2a3342;
}

.info-row {
    display: flex;
    align-items: center;
    height: 38px;
    margin-bottom: 5px;
    padding: 0 19px;
    color: #5f6675;
}

.info-row.shaded {
    background-color: #f4f5f7;
}

.info-key {
    margin-left: 8px;
    font-size: 10.500px;
}

.info-val {
    display: flex;
    align-items: center;
    gap: 4px;
    margin-left: auto;
    font-size: 12px;
    color: #3f4654;
}

.ic-check {
    width: 13px;
    height: 13px;
    color: #4fb64b;
}

.act-head {
    display: flex;
    align-items: center;
    justify-content: space-between;
    height: 16px;
    padding-right: 8px;
    font-size: 13px;
    font-weight: 500;
    color: #323e4f;
}

.act-tools {
    display: flex;
    align-items: center;
    height: 31px;
    margin-top: 22px;
}

.act-search {
    display: flex;
    align-items: center;
    gap: 6px;
    width: 251px;
    height: 31px;
    padding: 0 11px;
    border: 1px solid #b9bcc9;
    border-radius: 2px;
    color: #b4b8c2;
    font-size: 10.500px;
}

.act-search .ic {
    color: #8f95a1;
}

.sort-btn {
    display: flex;
    align-items: center;
    justify-content: center;
    width: 27px;
    height: 27px;
    margin-left: 12px;
    border: 1px solid #d5d7de;
    border-radius: 2px;
    color: #8f95a1;
}

.filter-btn {
    display: flex;
    align-items: center;
    justify-content: center;
    gap: 5px;
    width: 71px;
    height: 27px;
    margin-left: 11px;
    border: 1px solid #d5d7de;
    border-radius: 2px;
    box-shadow: 0 1px 2px rgba(50, 62, 79, .1);
    color: #a4a8b3;
    font-family: "Noto Sans", sans-serif;
    font-size: 10.500px;
}

.act-list {
    width: 346px;
    margin: 28px 0 0 15px;
}

.day-head {
    display: flex;
    align-items: center;
    justify-content: space-between;
    height: 23px;
    padding: 0 12px 2px 5px;
    font-size: 11px;
    font-weight: 500;
    color: #323e4f;
}

.day-head .ic {
    color: #5f6675;
}

.day-two {
    height: 60px;
    padding-bottom: 4px;
    border-bottom: 1px solid #e8e9ec;
    font-weight: 400;
    color: #4a5160;
}

.act-item {
    display: flex;
    gap: 10px;
    height: 60px;
    padding: 14px 0 0 5px;
    border-bottom: 1px solid #e8e9ec;
}

.act-item.tall {
    height: 64px;
    padding-top: 18px;
}

.act-item.last {
    border-bottom: 0;
}

.bubble {
    display: flex;
    align-items: center;
    justify-content: center;
    flex: none;
    width: 30px;
    height: 30px;
    border-radius: 50%;
}

.bubble.yellow {
    background-color: #fdeec2;
    color: #f5c344;
}

.bubble.lime {
    background-color: #d6efd3;
    color: #5cb560;
}

.bubble.sky {
    background-color: #c9e6f5;
    color: #3d9bdc;
}

.bubble.violet {
    background-color: #ebe5fd;
    color: #a98ff0;
}

.act-item p {
    font-size: 11px;
    line-height: 14px;
    letter-spacing: -.4px;
    color: #3f4654;
    white-space: nowrap;
}

.act-item p a {
    margin-left: 2px;
    font-size: 10.800px;
    color: #7fb1f5;
    position: relative;
    top: 1.500px;
}

.act-item small {
    display: block;
    margin-top: 3px;
    font-size: 9px;
    line-height: 14px;
    color: #8a8f9c;
}

.app-fade {
    position: absolute;
    left: -40px;
    right: -40px;
    top: 557px;
    height: 215px;
    background: linear-gradient(180deg, rgba(255, 255, 255, 0) 0, rgba(255, 255, 255, .96) 165px, #fff 180px);
    pointer-events: none;
}
```
